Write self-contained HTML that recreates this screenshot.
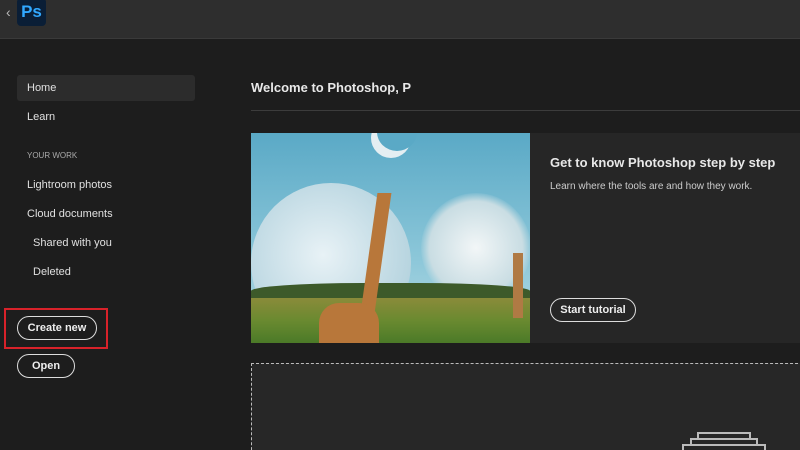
<!DOCTYPE html>
<html><head><style>
html,body{margin:0;width:800px;height:450px;overflow:hidden}
body{background:#1d1d1d;font-family:"Liberation Sans",sans-serif;color:#e8e8e8;position:relative}
.top{position:absolute;left:0;top:0;width:800px;height:38px;background:#2e2e2e;border-bottom:1px solid #3a3a3a}
.logo{position:absolute;left:17px;top:-2px;width:29px;height:28px;background:#0a1e36;border-radius:4px;color:#31a8ff;font-weight:bold;font-size:17px;line-height:28px;text-align:center}
.back{position:absolute;left:6px;top:4px;color:#bbb;font-size:14px}
.nav{position:absolute;left:17px;font-size:11px;color:#e0e0e0}
.home{position:absolute;left:17px;top:75px;width:178px;height:26px;background:#2c2c2c;border-radius:3px}
.btn{position:absolute;border:1.5px solid #ddd;border-radius:14px;font-size:11px;font-weight:bold;color:#eee;text-align:center;line-height:22px;height:22px}
</style></head><body>
<div class="top"><span class="back">‹</span><div class="logo">Ps</div></div>
<div class="home"></div>
<div class="nav" style="left:27px;top:82px">Home</div>
<div class="nav" style="left:27px;top:111px">Learn</div>
<div class="nav" style="left:27px;top:151px;font-size:8px;color:#aaa">YOUR WORK</div>
<div class="nav" style="left:27px;top:179px">Lightroom photos</div>
<div class="nav" style="left:27px;top:208px">Cloud documents</div>
<div class="nav" style="left:33px;top:237px">Shared with you</div>
<div class="nav" style="left:33px;top:266px">Deleted</div>
<div style="position:absolute;left:4px;top:308px;width:104px;height:41px;border:2px solid #d8222a;box-sizing:border-box"></div>
<div class="btn" style="left:17px;top:316px;width:78px">Create new</div>
<div class="btn" style="left:17px;top:354px;width:56px">Open</div>
<div style="position:absolute;left:251px;top:80px;font-size:13px;font-weight:bold">Welcome to Photoshop, P</div>
<div style="position:absolute;left:251px;top:110px;width:549px;height:1px;background:#3c3c3c"></div>
<div style="position:absolute;left:251px;top:133px;width:549px;height:210px;background:#262626"></div>
<div style="position:absolute;left:251px;top:133px;width:279px;height:210px;overflow:hidden;background:linear-gradient(#5aa9c6,#8cc7d9 60%,#b9dde6)">
 <div style="position:absolute;left:0;top:50px;width:160px;height:160px;border-radius:50%;background:radial-gradient(circle at 45% 45%,#e8f2f6,#b8d5e0 70%,#9bc0cf)"></div>
 <div style="position:absolute;left:120px;top:-15px;width:40px;height:40px;border-radius:50%;background:#e4eef2"></div>
 <div style="position:absolute;left:126px;top:-20px;width:40px;height:38px;border-radius:50%;background:#5aa9c6"></div>
 <div style="position:absolute;left:170px;top:60px;width:110px;height:110px;border-radius:50%;background:radial-gradient(#f2f6f7,#c9dde3 60%,transparent 72%)"></div>
 <div style="position:absolute;left:0;top:150px;width:279px;height:20px;background:#3d5a2a;border-radius:40% 40% 0 0"></div>
 <div style="position:absolute;left:0;top:165px;width:279px;height:45px;background:linear-gradient(#8a8b3a,#6a8a30 50%,#4b7a28)"></div>
 <div style="position:absolute;left:118px;top:60px;width:14px;height:120px;background:#b8773a;transform:skewX(-8deg)"></div>
 <div style="position:absolute;left:68px;top:170px;width:60px;height:40px;background:#b8773a;border-radius:20px 20px 0 0"></div>
 <div style="position:absolute;left:262px;top:120px;width:10px;height:65px;background:#b07a44"></div>
</div>
<div style="position:absolute;left:550px;top:155px;font-size:13px;font-weight:bold">Get to know Photoshop step by step</div>
<div style="position:absolute;left:550px;top:181px;font-size:10px;color:#ccc">Learn where the tools are and how they work.</div>
<div class="btn" style="left:550px;top:298px;width:84px">Start tutorial</div>
<div style="position:absolute;left:251px;top:363px;width:560px;height:100px;border:1px dashed #bbb;background:#272727"></div>
<div style="position:absolute;left:697px;top:432px;width:50px;height:5px;border:2px solid #bbb;border-bottom:none"></div>
<div style="position:absolute;left:690px;top:438px;width:64px;height:5px;border:2px solid #bbb;border-bottom:none"></div>
<div style="position:absolute;left:682px;top:444px;width:80px;height:5px;border:2px solid #bbb;border-bottom:none"></div>
</body></html>
